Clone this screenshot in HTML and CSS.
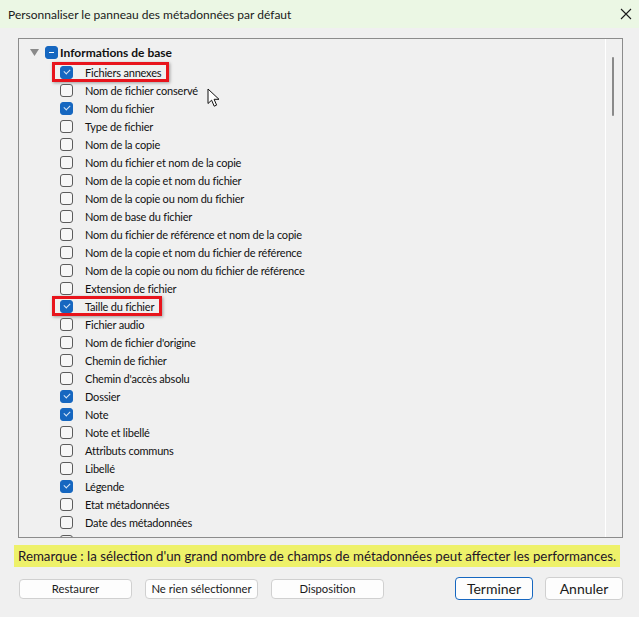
FILE: index.html
```html
<!DOCTYPE html>
<html lang="fr">
<head>
<meta charset="utf-8">
<title>Personnaliser le panneau des métadonnées par défaut</title>
<link rel="stylesheet" href="styles.css">
</head>
<body>
<div class="dialog">
  <div class="titlebar">
    <span class="title">Personnaliser le panneau des métadonnées par défaut</span>
    <svg class="close" width="12" height="12" viewBox="0 0 12 12"><path d="M1 1 L11 11 M11 1 L1 11" stroke="#1a1a1a" stroke-width="1.1" fill="none"/></svg>
  </div>
  <div class="content">
    <div class="panel">
      <div class="tree">
        <div class="group">
          <svg class="twisty" width="9" height="7" viewBox="0 0 9 7"><path d="M0 0 H9 L4.5 7 Z" fill="#8a8a8a"/></svg>
          <span class="cb cb-mixed"></span>
          <span class="group-label">Informations de base</span>
        </div>
        <div class="row"><span class="hl"><span class="cb cb-on"></span><span class="lbl">Fichiers annexes</span></span></div>
        <div class="row"><span class="cb"></span><span class="lbl">Nom de fichier conservé</span></div>
        <div class="row"><span class="cb cb-on"></span><span class="lbl">Nom du fichier</span></div>
        <div class="row"><span class="cb"></span><span class="lbl">Type de fichier</span></div>
        <div class="row"><span class="cb"></span><span class="lbl">Nom de la copie</span></div>
        <div class="row"><span class="cb"></span><span class="lbl">Nom du fichier et nom de la copie</span></div>
        <div class="row"><span class="cb"></span><span class="lbl">Nom de la copie et nom du fichier</span></div>
        <div class="row"><span class="cb"></span><span class="lbl">Nom de la copie ou nom du fichier</span></div>
        <div class="row"><span class="cb"></span><span class="lbl">Nom de base du fichier</span></div>
        <div class="row"><span class="cb"></span><span class="lbl">Nom du fichier de référence et nom de la copie</span></div>
        <div class="row"><span class="cb"></span><span class="lbl">Nom de la copie et nom du fichier de référence</span></div>
        <div class="row"><span class="cb"></span><span class="lbl">Nom de la copie ou nom du fichier de référence</span></div>
        <div class="row"><span class="cb"></span><span class="lbl">Extension de fichier</span></div>
        <div class="row"><span class="hl"><span class="cb cb-on"></span><span class="lbl">Taille du fichier</span></span></div>
        <div class="row"><span class="cb"></span><span class="lbl">Fichier audio</span></div>
        <div class="row"><span class="cb"></span><span class="lbl">Nom de fichier d'origine</span></div>
        <div class="row"><span class="cb"></span><span class="lbl">Chemin de fichier</span></div>
        <div class="row"><span class="cb"></span><span class="lbl">Chemin d'accès absolu</span></div>
        <div class="row"><span class="cb cb-on"></span><span class="lbl">Dossier</span></div>
        <div class="row"><span class="cb cb-on"></span><span class="lbl">Note</span></div>
        <div class="row"><span class="cb"></span><span class="lbl">Note et libellé</span></div>
        <div class="row"><span class="cb"></span><span class="lbl">Attributs communs</span></div>
        <div class="row"><span class="cb"></span><span class="lbl">Libellé</span></div>
        <div class="row"><span class="cb cb-on"></span><span class="lbl">Légende</span></div>
        <div class="row"><span class="cb"></span><span class="lbl">Etat métadonnées</span></div>
        <div class="row"><span class="cb"></span><span class="lbl">Date des métadonnées</span></div>
      </div>
      <div class="scrollbar"><div class="thumb"></div></div>
      <svg class="cursor" width="15" height="20" viewBox="0 0 15 20"><path d="M1 1 L1 15.5 L4.6 12.2 L7.2 18.2 L9.6 17.1 L7.1 11.3 L12 11.3 Z" fill="#fff" stroke="#111" stroke-width="1" stroke-linejoin="round"/></svg>
      <span class="peek"></span>
    </div>
    <div class="notice">Remarque : la sélection d'un grand nombre de champs de métadonnées peut affecter les performances.</div>
    <div class="buttons">
      <button class="btn btn-sm">Restaurer</button>
      <button class="btn btn-sm">Ne rien sélectionner</button>
      <button class="btn btn-sm">Disposition</button>
      <span class="spacer"></span>
      <button class="btn btn-lg btn-default">Terminer</button>
      <button class="btn btn-lg">Annuler</button>
    </div>
  </div>
</div>
</body>
</html>
```
FILE: styles.css
```css
html, body {
  margin: 0;
  padding: 0;
  background: #f0f0f0;
}
body {
  font-family: Lato, "Noto Sans", sans-serif;
  color: #111;
  width: 639px;
  height: 617px;
  overflow: hidden;
}
.dialog {
  width: 639px;
  height: 617px;
  display: flex;
  flex-direction: column;
}
.titlebar {
  height: 28px;
  background: #ebf7e4;
  display: flex;
  align-items: center;
  padding: 0 7px 0 8px;
  box-sizing: border-box;
}
.title {
  font-size: 12px;
  flex: 1;
  color: #1a1a1a;
}
.content {
  padding: 10px 16px 0 18px;
  display: flex;
  flex-direction: column;
}
.panel {
  position: relative;
  width: 605px;
  height: 500px;
  box-sizing: border-box;
  border: 1px solid #8c8c8c;
  display: flex;
  overflow: hidden;
}
.tree {
  flex: 1;
  padding-top: 3px;
  font-size: 11px;
  letter-spacing: -0.2px;
}
.group {
  height: 21px;
  display: flex;
  align-items: center;
  padding-left: 11px;
}
.twisty {
  margin-right: 6px;
}
.group-label {
  font-weight: bold;
  font-size: 12px;
  letter-spacing: 0;
  margin-left: 2px;
}
.row {
  height: 18px;
  display: flex;
  align-items: center;
  padding-left: 41px;
}
.hl {
  position: relative;
  display: flex;
  align-items: center;
  height: 18px;
}
.hl::after {
  content: "";
  position: absolute;
  left: -8px;
  right: -8px;
  top: -1px;
  bottom: -1px;
  border: 3px solid #e8141c;
  box-shadow: 1px 1px 3px rgba(0, 0, 0, 0.35);
}
.cb {
  width: 13px;
  height: 13px;
  box-sizing: border-box;
  border: 1px solid #5c5c5c;
  border-radius: 3px;
  background: #f7f7f7;
  flex: none;
  position: relative;
}
.cb-on {
  background: #1667c0;
  border-color: #1667c0;
}
.cb-on::after {
  content: "";
  position: absolute;
  left: 3px;
  top: 2px;
  width: 5px;
  height: 3px;
  border-left: 1px solid #d8e6f6;
  border-bottom: 1px solid #d8e6f6;
  transform: rotate(-45deg);
}
.cb-mixed {
  background: #1667c0;
  border-color: #1667c0;
}
.cb-mixed::after {
  content: "";
  position: absolute;
  left: 3px;
  top: 5px;
  width: 5px;
  height: 1px;
  background: #fff;
}
.lbl {
  margin-left: 12px;
  white-space: nowrap;
}
.scrollbar {
  width: 16px;
  border-left: 1px solid #ffffff;
  position: relative;
  flex: none;
}
.thumb {
  position: absolute;
  left: 6px;
  top: 18px;
  width: 2px;
  height: 59px;
  background: #8a8a8a;
  border-radius: 1px;
}
.cursor {
  position: absolute;
  left: 188px;
  top: 49px;
}
.peek {
  position: absolute;
  left: 41px;
  top: 496px;
  width: 13px;
  height: 13px;
  box-sizing: border-box;
  border: 1px solid #5c5c5c;
  border-radius: 3px;
}
.notice {
  margin: 7px 0 0 -4px;
  width: 606px;
  height: 22px;
  box-sizing: border-box;
  background: #eef16a;
  font-size: 13.3px;
  line-height: 22px;
  padding-left: 4px;
  white-space: nowrap;
  color: #1e1428;
}
.buttons {
  display: flex;
  align-items: center;
  margin-top: 10px;
  padding-left: 1px;
}
.btn {
  font-family: Lato, "Noto Sans", sans-serif;
  background: #fdfdfd;
  border: 1px solid #d0d0d0;
  border-radius: 4px;
  color: #1a1a1a;
  padding: 0;
}
.btn-sm {
  width: 113px;
  height: 20px;
  font-size: 11.3px;
  margin-right: 13px;
}
.spacer {
  flex: 1;
}
.btn-lg {
  width: 78px;
  height: 23px;
  font-size: 14px;
  margin-left: 12px;
}
.btn-default {
  border-color: #1667c0;
}
```
